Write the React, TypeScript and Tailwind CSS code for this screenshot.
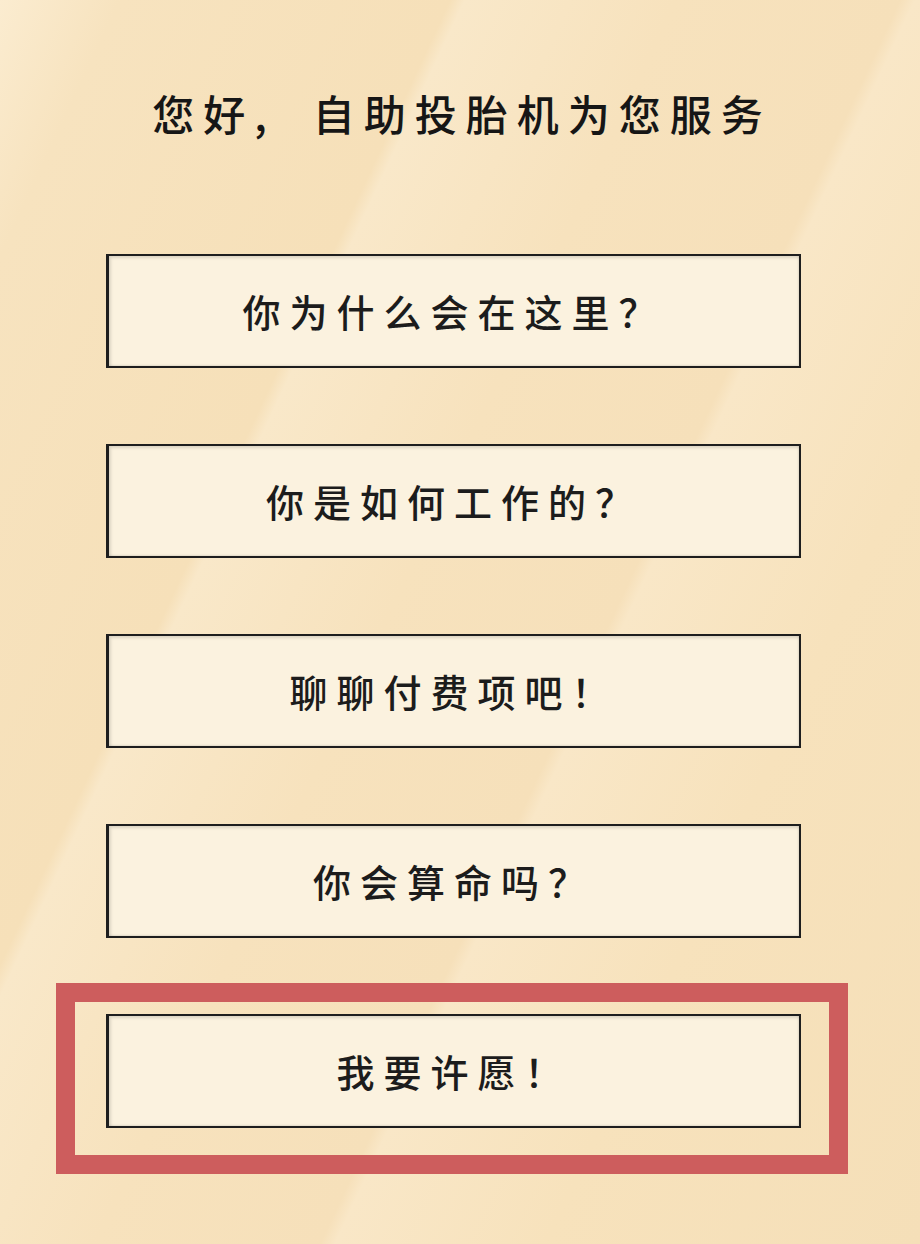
import React from "react";

const items = [
  "你为什么会在这里？",
  "你是如何工作的？",
  "聊聊付费项吧！",
  "你会算命吗？",
];

function Btn({ label }: { label: string }) {
  return (
    <div className="w-[695px] h-[114px] ml-[106px] flex items-center justify-center bg-[#fbf2df] border-2 border-l-[3px] border-[#1e1e1e] shadow-[inset_2px_2px_3px_rgba(0,0,0,0.12),inset_-1px_-1px_2px_rgba(0,0,0,0.1)]">
      <span className="text-[38px] leading-none tracking-[9px] font-medium text-[#1c1c1c]">{label}</span>
    </div>
  );
}

export default function App() {
  return (
    <div
      className="w-[920px] h-[1244px] overflow-hidden bg-[linear-gradient(115deg,#fbecd0_0%,#f7e3bf_8%,#f6e0b9_30%,#f9e8c9_31%,#f7e2bd_45%,#f6e0ba_60%,#f9e7c7_61%,#f7e2bc_75%,#f5dfb8_100%)]"
      style={{ fontFamily: '"Noto Sans CJK SC", "Noto Sans", sans-serif' }}
    >
      <div className="pt-[88px] flex justify-center">
        <h1 className="text-[42px] leading-[50px] tracking-[9px] text-[#161616] font-medium pl-[4px]">
          您好, &nbsp;自助投胎机为您服务
        </h1>
      </div>
      <div className="mt-[116px] flex flex-col gap-[76px]">
        {items.map((t) => (
          <Btn key={t} label={t} />
        ))}
        <div className="relative">
          <div className="absolute left-[56px] top-[-31px] w-[792px] h-[191px] border-[19px] border-[#cd5d5d] pointer-events-none" />
          <Btn label="我要许愿！" />
        </div>
      </div>
    </div>
  );
}
